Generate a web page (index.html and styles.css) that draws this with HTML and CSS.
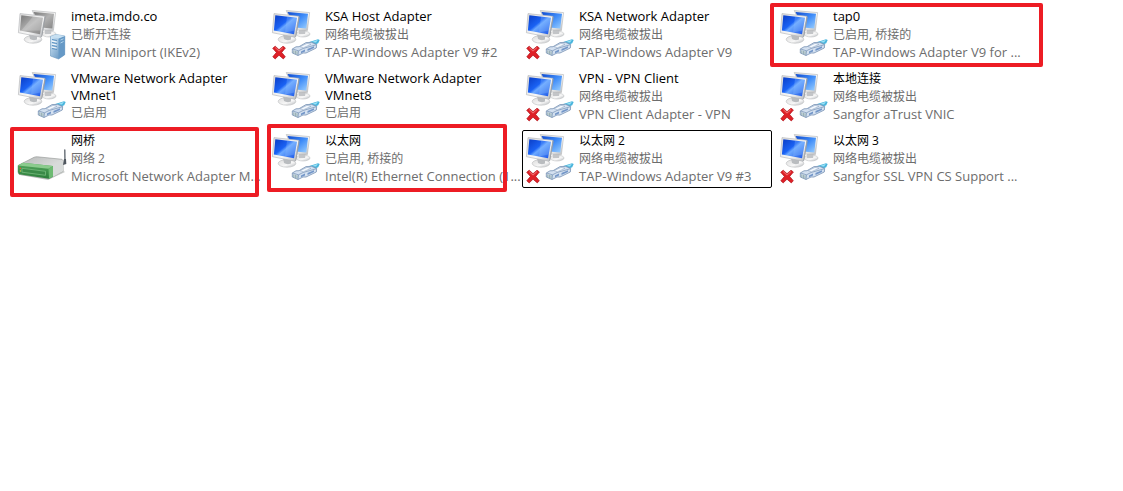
FILE: index.html
```html
<!DOCTYPE html>
<html lang="zh-CN">
<head>
<meta charset="utf-8">
<title>网络连接</title>
<link rel="stylesheet" href="styles.css">
</head>
<body>
<svg class="defs" aria-hidden="true">
  <defs>
    <linearGradient id="blue" x1="0" y1="0" x2="1" y2="1">
      <stop offset="0" stop-color="#0a3cc4"/><stop offset=".42" stop-color="#1a62f4"/><stop offset=".52" stop-color="#6ba8ff"/><stop offset="1" stop-color="#1450e6"/>
    </linearGradient>
    <linearGradient id="sky" x1="0" y1="0" x2="1" y2="1">
      <stop offset="0" stop-color="#0d49cf"/><stop offset=".5" stop-color="#3f8cf8"/><stop offset="1" stop-color="#9cd0ff"/>
    </linearGradient>
    <linearGradient id="gray" x1="0" y1="0" x2="1" y2="1">
      <stop offset="0" stop-color="#777"/><stop offset=".5" stop-color="#b2b2b2"/><stop offset="1" stop-color="#858585"/>
    </linearGradient>
    <linearGradient id="silver" x1="0" y1="0" x2="1" y2="1">
      <stop offset="0" stop-color="#dcdcdc"/><stop offset=".6" stop-color="#f7f7f7"/><stop offset="1" stop-color="#b5b8bc"/>
    </linearGradient>
    <linearGradient id="tower" x1="0" y1="0" x2="1" y2="1">
      <stop offset="0" stop-color="#dceefa"/><stop offset="1" stop-color="#4f86b8"/>
    </linearGradient>
    <linearGradient id="green" x1="0" y1="0" x2="0" y2="1">
      <stop offset="0" stop-color="#55a85f"/><stop offset="1" stop-color="#2c7d3a"/>
    </linearGradient>
    <linearGradient id="lid" x1="0" y1="0" x2="1" y2="1">
      <stop offset="0" stop-color="#b4b7b6"/><stop offset="1" stop-color="#f4f4f4"/>
    </linearGradient>

    <symbol id="stands" viewBox="0 0 52 52">
      <ellipse cx="33" cy="26" rx="7" ry="3" fill="url(#silver)" stroke="#b4b6b8" stroke-width=".5"/>
      <path d="M29 20h7l-1 6h-6z" fill="#c3c5c8"/>
      <path d="M16.200 2.500 39.600 4.600 37.400 22.600 25 22z" fill="url(#silver)" stroke="#b5b7b9" stroke-width=".6"/>
      <ellipse cx="17" cy="31.400" rx="8.800" ry="3.800" fill="url(#silver)" stroke="#b8babc" stroke-width=".6"/>
      <path d="M13 26 21 28 21 31.500Q17 33 14 31z" fill="#b9bcbf"/>
    </symbol>
    <symbol id="frame" viewBox="0 0 52 52">
      <path d="M4 5.600 28.800 8.300 25.200 29.200 2.400 24.700z" fill="url(#silver)" stroke="#b0b2b5" stroke-width=".6"/>
      <path d="M28.800 8.300 29.700 9 26.200 28.600 25.200 29.200z" fill="#9a9ea3"/>
    </symbol>
    <symbol id="pcs" viewBox="0 0 52 52">
      <use href="#stands"/>
      <path d="M17.500 4 38 5.800 36.300 20.500 25 19.400z" fill="url(#sky)"/>
      <use href="#frame"/>
      <path d="M5.300 7.200 27 9.700 24 26.200 3.900 22.600z" fill="url(#blue)"/>
      <path d="M17 8.600 27 9.700 24.600 22.500 15 24.600z" fill="#8fc0ff" opacity=".3"/>
    </symbol>
    <symbol id="pcs-off" viewBox="0 0 52 52">
      <use href="#stands"/>
      <path d="M17.500 4 38 5.800 36.300 20.500 25 19.400z" fill="url(#gray)"/>
      <use href="#frame"/>
      <path d="M5.300 7.200 27 9.700 24 26.200 3.900 22.600z" fill="url(#gray)"/>
      <path d="M17 8.600 27 9.700 24.600 22.500 5 22.700z" fill="#fff" opacity=".22"/>
    </symbol>
    <symbol id="plug" viewBox="0 0 52 52">
      <path d="M38.500 34.300 48 31.200 49.700 32 48.200 35.300 42.500 37.500z" fill="#48b4dc"/>
      <path d="M42 34 48 31.800 46 34.500z" fill="#9ee2f6"/>
      <path d="M22.300 41 26 38.800 29 38.700 36 34.600 41.500 34.300 46.700 36.500 46.300 40 36 45 33 45 28 47.500 22.300 45z" fill="#d3e0f0" stroke="#7690b3" stroke-width=".8"/>
      <path d="M22.500 41 28.500 42.800 33 40.500 46.500 36.700M28.500 42.800 28 47.500" fill="none" stroke="#7690b3" stroke-width=".7"/>
      <path d="M30 38.700 37 35.400 41 36.300 33.500 39.700z" fill="#f4f9fe" stroke="#8aa1bf" stroke-width=".5"/>
      <path d="M23.800 42.300v3M25.400 42.800v3.200M27 43.200v3.400" stroke="#7d9a92" stroke-width=".7"/>
      <path d="M31 43.500 35 41.500v2L31 45.300zM37.500 41 44 38.200v1.800L37.500 43z" fill="#7396c8"/>
    </symbol>
    <symbol id="cross" viewBox="0 0 52 52">
      <path d="M5.200 38.200 9 41.700 13 38.200 15.400 40 11.700 44.400 15.300 48.800 13.300 50.900 9 47.200 5.200 50.900 2.800 48.800 6.400 44.400 2.700 40.300z" fill="#df2027" stroke="#b0131a" stroke-width=".7" stroke-linejoin="round"/>
      <path d="M5.200 39.600 9 43.100 13 39.500" fill="none" stroke="#f57d7d" stroke-width=".9"/>
    </symbol>
    <symbol id="server" viewBox="0 0 52 52">
      <path d="M34.500 28.500 40 26.500 48.800 28 48.700 46.800 42.500 51 34.500 48z" fill="url(#tower)" stroke="#6c98c0" stroke-width=".6"/>
      <path d="M42.500 30.500 48.800 28 48.700 46.800 42.500 51z" fill="#6699c6"/>
      <path d="M34.500 28.500 40 26.500 48.800 28 42.500 30.500z" fill="#c7e0f2"/>
      <path d="M36 31.500l5 1M36 34.500l5 1M36 37.500l5 1M36 40.500l5 1" stroke="#5a91c2"/>
      <path d="M35.500 33l5 1M35.500 36l5 1M35.500 39l5 1" stroke="#fff" stroke-width=".9"/>
      <path d="M44.500 32 47.500 30.800M44.500 35 47.500 33.500" stroke="#b9d9ee" stroke-width=".9"/>
    </symbol>
    <symbol id="router" viewBox="0 0 52 52">
      <path d="M4 43 32 48 49 40 46 38z" fill="#c5c8c6"/>
      <path d="M2 33.500 18 25.300Q19.500 24.600 21.500 24.800L46 27.300 47 28.500 47.200 39 33 46.800 3 42.300 2 40z" fill="url(#lid)" stroke="#909392" stroke-width=".6"/>
      <path d="M37 34 47 28.500 47.200 39 37 44.700z" fill="#d8dbda"/>
      <path d="M2 33.500 7 30.800 37 34 37 44.500 33 46.800 3 42.300 2 40z" fill="url(#green)"/>
      <path d="M2 33.500 7 30.800 37 34 32.500 36.700z" fill="#8bcb8d"/>
      <path d="M32.500 36.700 37 34V44.500L33 46.800z" fill="#6dba72"/>
      <path d="M6 36.300 29.500 39.300V43.300L6 40.200z" fill="#3b8a48" stroke="#8ccb90" stroke-width=".6"/>
      <path d="M3.800 35.700h1.200v1.200H3.800z" fill="#ff4b30"/><path d="M3.800 38.400h1.200v1.200H3.800z" fill="#ffd04a"/>
      <path d="M48.800 18 49 31" stroke="#59616a" stroke-width="1.300" stroke-linecap="round"/>
      <path d="M48 27h2l.3 5-3.300 1z" fill="#50575f"/>
    </symbol>
  </defs>
</svg>

<main class="connections">
  <article class="tile">
    <svg class="icon" viewBox="0 0 52 52" aria-hidden="true"><use href="#pcs-off"/><use href="#server"/></svg>
    <div class="text"><h2 class="name latin">imeta.imdo.co</h2><p class="line">已断开连接</p><p class="line latin">WAN Miniport (IKEv2)</p></div>
  </article>
  <article class="tile">
    <svg class="icon" viewBox="0 0 52 52" aria-hidden="true"><use href="#pcs"/><use href="#plug"/><use href="#cross"/></svg>
    <div class="text"><h2 class="name latin">KSA Host Adapter</h2><p class="line">网络电缆被拔出</p><p class="line latin">TAP-Windows Adapter V9 #2</p></div>
  </article>
  <article class="tile">
    <svg class="icon" viewBox="0 0 52 52" aria-hidden="true"><use href="#pcs"/><use href="#plug"/><use href="#cross"/></svg>
    <div class="text"><h2 class="name latin">KSA Network Adapter</h2><p class="line">网络电缆被拔出</p><p class="line latin">TAP-Windows Adapter V9</p></div>
  </article>
  <article class="tile">
    <svg class="icon" viewBox="0 0 52 52" aria-hidden="true"><use href="#pcs"/><use href="#plug"/></svg>
    <div class="text"><h2 class="name latin">tap0</h2><p class="line">已启用, 桥接的</p><p class="line latin">TAP-Windows Adapter V9 for ...</p></div>
    <span class="mark mark-tap"></span>
  </article>

  <article class="tile">
    <svg class="icon" viewBox="0 0 52 52" aria-hidden="true"><use href="#pcs"/><use href="#plug"/></svg>
    <div class="text text-wrapped"><h2 class="name latin">VMware Network Adapter VMnet1</h2><p class="line">已启用</p></div>
  </article>
  <article class="tile">
    <svg class="icon" viewBox="0 0 52 52" aria-hidden="true"><use href="#pcs"/><use href="#plug"/></svg>
    <div class="text text-wrapped"><h2 class="name latin">VMware Network Adapter VMnet8</h2><p class="line">已启用</p></div>
  </article>
  <article class="tile">
    <svg class="icon" viewBox="0 0 52 52" aria-hidden="true"><use href="#pcs"/><use href="#plug"/><use href="#cross"/></svg>
    <div class="text"><h2 class="name latin">VPN - VPN Client</h2><p class="line">网络电缆被拔出</p><p class="line latin">VPN Client Adapter - VPN</p></div>
  </article>
  <article class="tile">
    <svg class="icon" viewBox="0 0 52 52" aria-hidden="true"><use href="#pcs"/><use href="#plug"/><use href="#cross"/></svg>
    <div class="text"><h2 class="name">本地连接</h2><p class="line">网络电缆被拔出</p><p class="line latin">Sangfor aTrust VNIC</p></div>
  </article>

  <article class="tile">
    <svg class="icon" viewBox="0 0 52 52" aria-hidden="true"><use href="#router"/></svg>
    <div class="text"><h2 class="name">网桥</h2><p class="line">网络 2</p><p class="line latin">Microsoft Network Adapter M...</p></div>
    <span class="mark mark-bridge"></span>
  </article>
  <article class="tile">
    <svg class="icon" viewBox="0 0 52 52" aria-hidden="true"><use href="#pcs"/><use href="#plug"/></svg>
    <div class="text"><h2 class="name">以太网</h2><p class="line">已启用, 桥接的</p><p class="line latin">Intel(R) Ethernet Connection (1...</p></div>
    <span class="mark mark-ethernet"></span>
  </article>
  <article class="tile tile-focused">
    <svg class="icon" viewBox="0 0 52 52" aria-hidden="true"><use href="#pcs"/><use href="#plug"/><use href="#cross"/></svg>
    <div class="text"><h2 class="name">以太网 2</h2><p class="line">网络电缆被拔出</p><p class="line latin">TAP-Windows Adapter V9 #3</p></div>
  </article>
  <article class="tile">
    <svg class="icon" viewBox="0 0 52 52" aria-hidden="true"><use href="#pcs"/><use href="#plug"/><use href="#cross"/></svg>
    <div class="text"><h2 class="name">以太网 3</h2><p class="line">网络电缆被拔出</p><p class="line latin">Sangfor SSL VPN CS Support ...</p></div>
  </article>
</main>
</body>
</html>
```

FILE: styles.css
```css
* {
  box-sizing: border-box;
}

body {
  min-height: 100vh;
  margin: 0;
  background: #fff;
  color: #000;
  font: 12px/17px "Open Sans", "Noto Sans CJK SC", sans-serif;
}

.defs {
  position: absolute;
  width: 0;
  height: 0;
}

.connections {
  display: grid;
  grid-template-columns: repeat(auto-fill, 250px);
  gap: 4px;
  padding: 6px 14px 16px;
}

.tile {
  position: relative;
  display: flex;
  gap: 3px;
  min-height: 58px;
  padding: 1px 0 1px 1px;
  border: 1px solid transparent;
  border-radius: 2px;
}

.tile-focused {
  border-color: #000;
}

.icon {
  flex: none;
  width: 52px;
  height: 52px;
}

.text {
  display: flex;
  flex: 1;
  flex-direction: column;
  gap: 1px;
  min-width: 0;
}

.text-wrapped {
  gap: 0;
}

.name,
.line {
  margin: 0;
  font-size: 12px;
  font-weight: 400;
}

.line {
  color: #6d6d6d;
  white-space: nowrap;
}

.latin {
  font-size: 13px;
}

.mark {
  position: absolute;
  border: 4px solid #ed1c24;
  border-radius: 2px;
  pointer-events: none;
}

.mark-tap {
  inset: -4px -18px -4px -7px;
}

.mark-bridge {
  inset: -4px 4px -10px -5px;
}

.mark-ethernet {
  inset: -7px 10px -5px -2px;
}
```
